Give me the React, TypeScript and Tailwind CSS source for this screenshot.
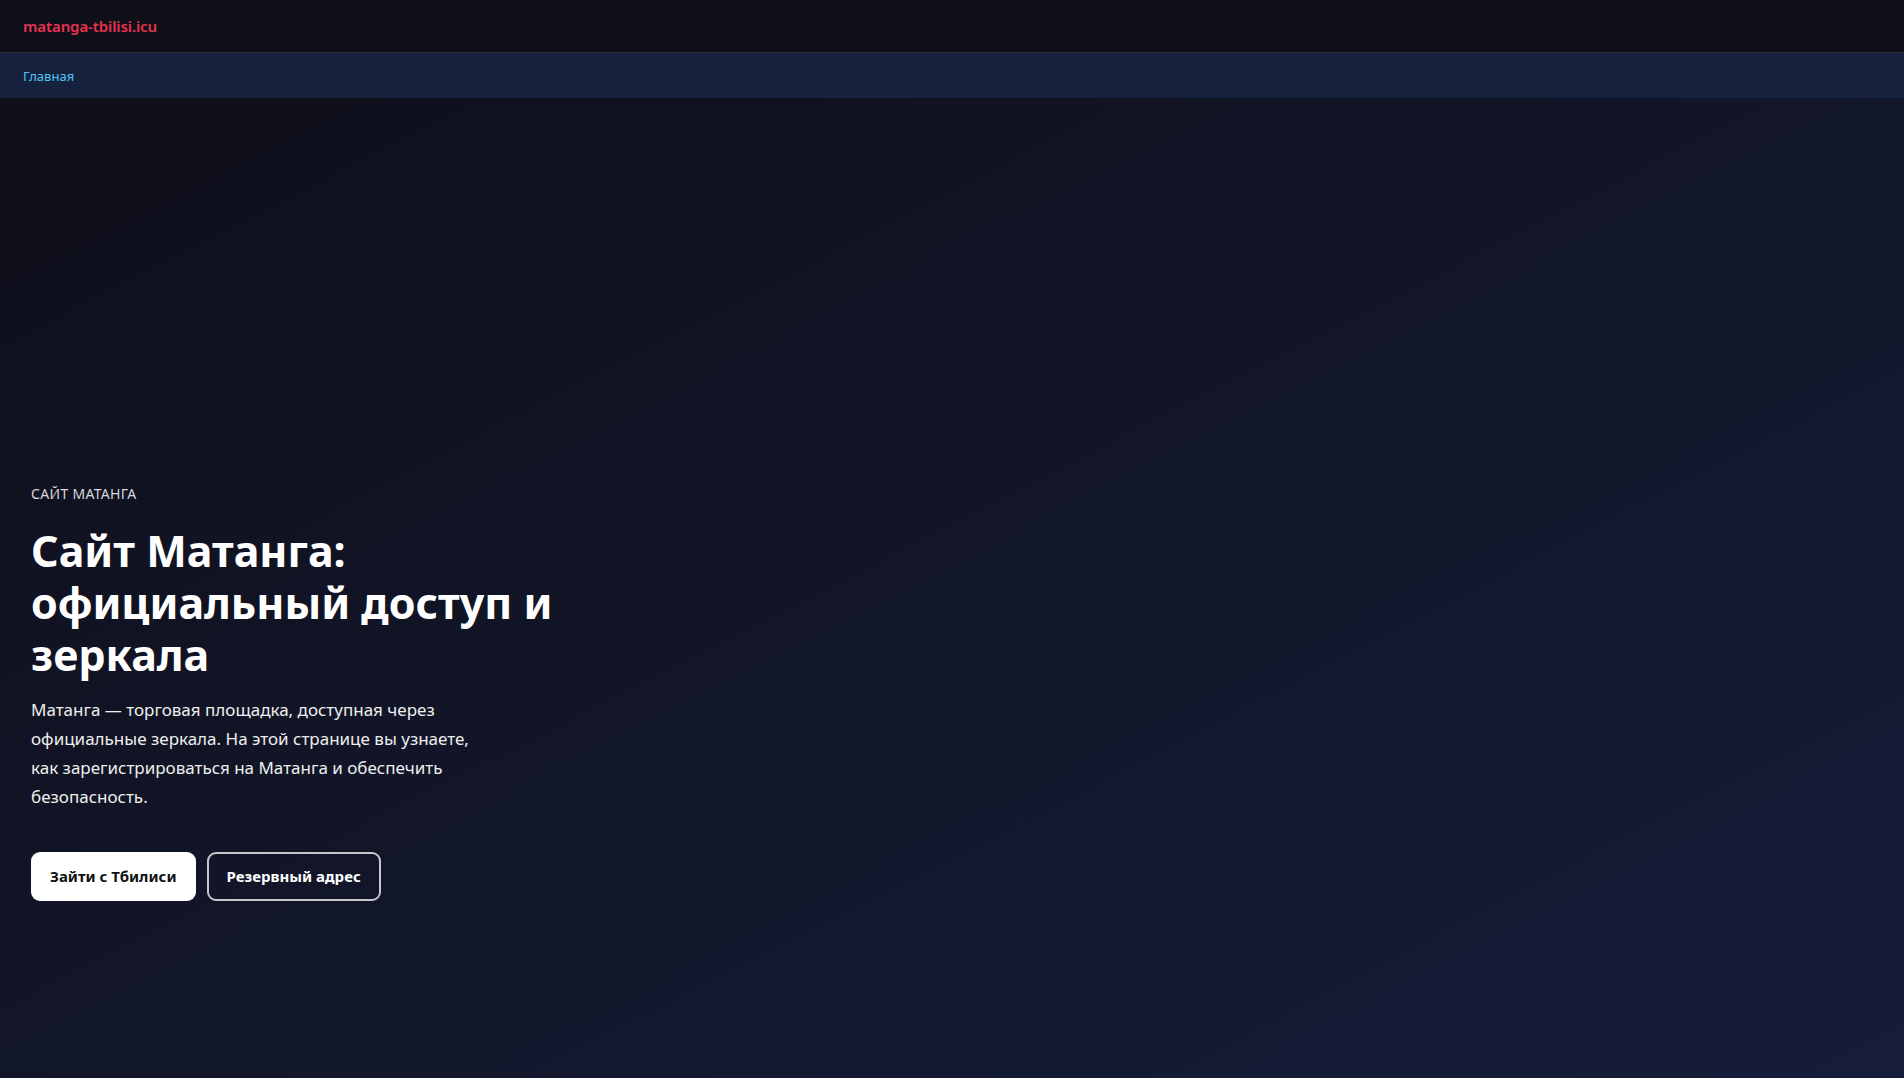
import React from "react";

export default function App() {
  return (
    <div className="min-h-screen w-full bg-[#10101c] text-white" style={{ fontFamily: '"Noto Sans", "Open Sans", sans-serif' }}>
      <header className="h-[53px] bg-[#0f0f19] border-b border-[#2b2b33] flex items-center px-[23px]">
        <span className="text-[15px] font-semibold text-[#e6334f] tracking-[-0.1px]">matanga-tbilisi.icu</span>
      </header>
      <nav className="h-[45px] bg-[#16213e] flex items-center px-[23px] pt-[3px]">
        <a className="text-[13px] text-[#4fc3f7]">Главная</a>
      </nav>
      <main className="h-[980px] bg-gradient-to-br from-[#0f0f1a] to-[#151d39] px-[31px] pt-[386px]">
        <div className="max-w-[580px]">
          <p className="text-[14px] uppercase text-[#d6d6dc] tracking-[0.3px] leading-[20px]">Сайт Матанга</p>
          <h1 className="mt-[21px] text-[43px] font-bold leading-[52px] text-white">
            Сайт Матанга:<br />официальный доступ и<br />зеркала
          </h1>
          <p className="mt-[14px] text-[17px] leading-[29px] text-[#eeeeee] max-w-[452px]">
            Матанга — торговая площадка, доступная через официальные зеркала. На этой странице вы узнаете, как зарегистрироваться на Матанга и обеспечить безопасность.
          </p>
          <div className="mt-[41px] flex gap-[11px]">
            <button className="h-[49px] px-[19px] rounded-[9px] bg-white text-[#111] text-[15px] font-bold">Зайти с Тбилиси</button>
            <button className="h-[49px] px-[18px] rounded-[9px] border-2 border-[#c8c8cc] text-white text-[15px] font-bold">Резервный адрес</button>
          </div>
        </div>
      </main>
    </div>
  );
}
